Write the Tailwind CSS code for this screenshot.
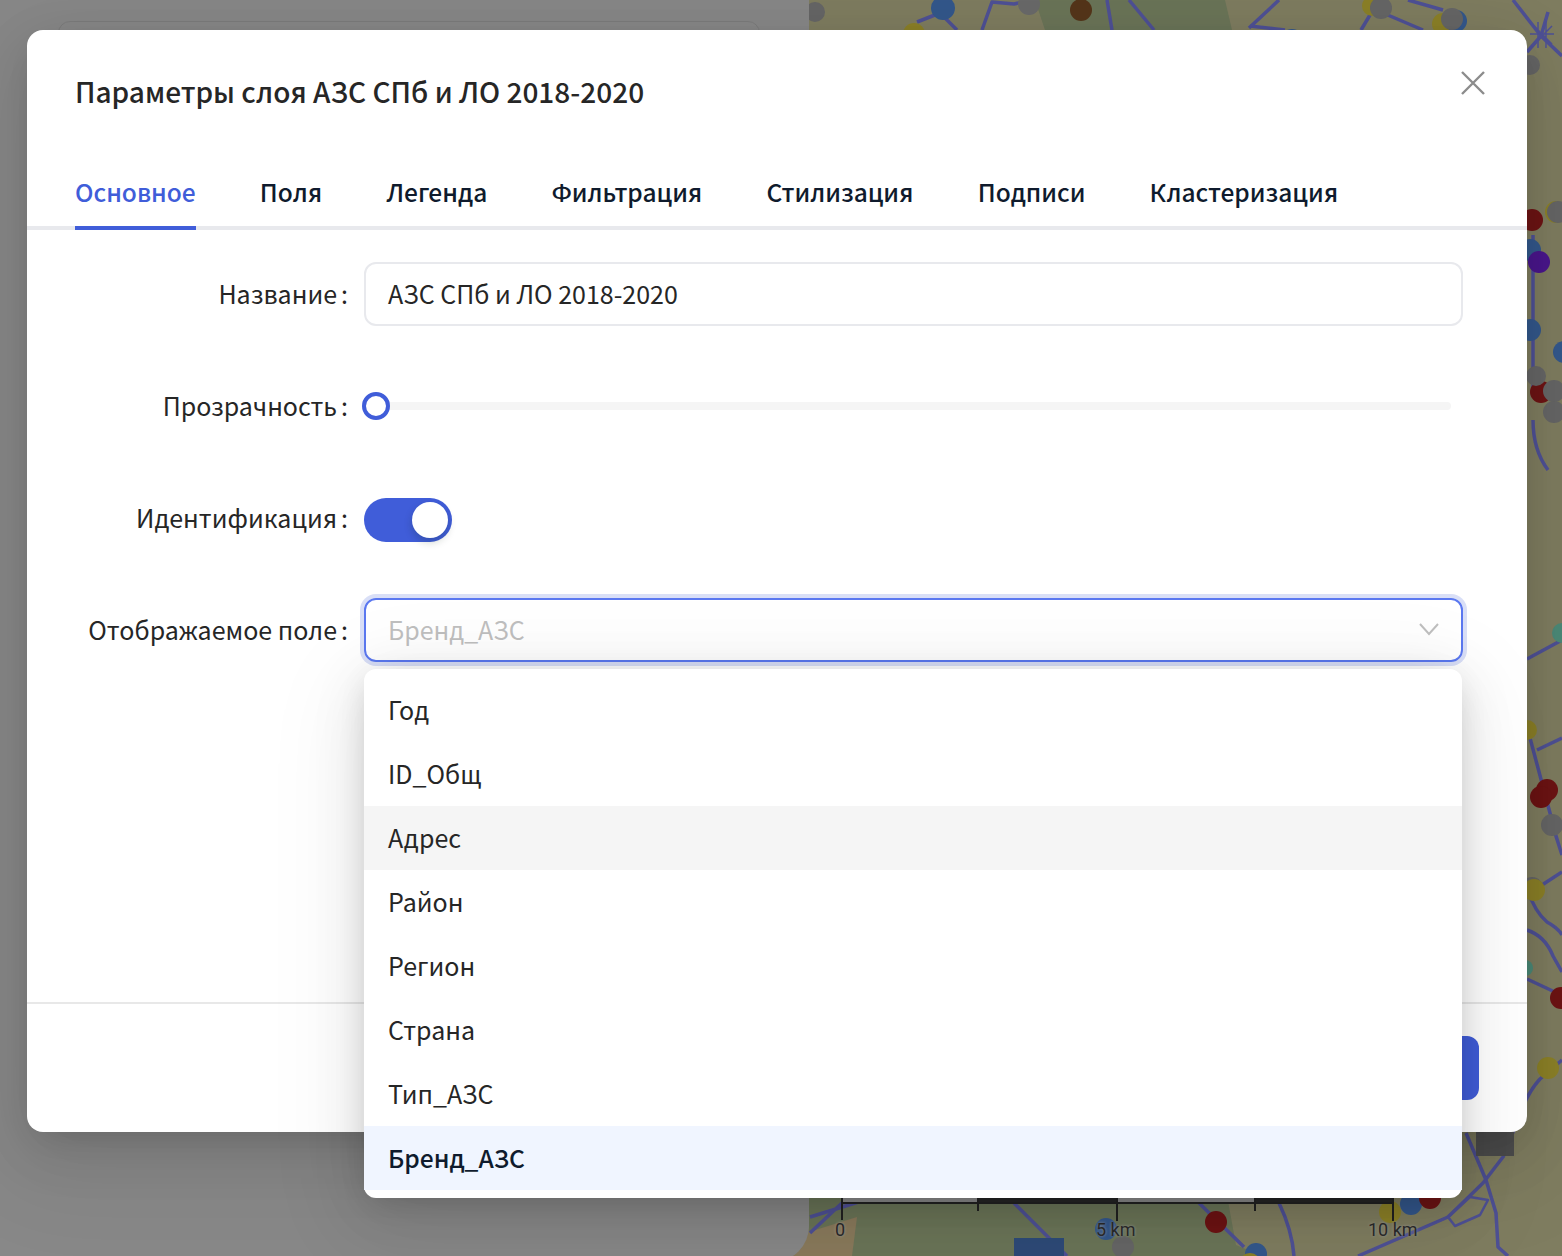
<!DOCTYPE html>
<html lang="ru">
  <head>
    <meta charset="UTF-8" />
    <title>Параметры слоя</title>
    <script src="https://cdn.jsdelivr.net/npm/@tailwindcss/browser@4"></script>
  </head>
  <body class="relative w-[1562px] h-[1256px] overflow-hidden bg-[#7f7d60] font-['Noto_Sans_CJK_SC','Noto_Sans',sans-serif] text-[#262626]">
    <!-- map behind the mask -->
    <svg class="absolute inset-0" width="1562" height="1256" viewBox="0 0 1562 1256" fill="none">
      <rect x="0" y="0" width="1562" height="1256" fill="#7f7d60" />
      <path d="M1035 0H1225L1232 30H1045Z" fill="#6b7558" />
      <path d="M809 1190H1226L1236 1245L1262 1256H809Z" fill="#6b7558" />
      <path d="M809 1232L857 1217L852 1256H790Z" fill="#8a7a5c" />
      <g stroke="#4f5196" stroke-width="3.5" stroke-linejoin="round">
        <path d="M917 22L940 13L957 30M945 5L940 13" />
        <path d="M982 30L992 2L1014 4L1032 0" />
        <path d="M1107 0L1112 30M1129 0L1154 30" />
        <path d="M1249 28L1279 0M1250 26L1285 30" />
        <path d="M1361 30L1373 10M1383 13L1423 30M1408 0L1443 10" />
        <path d="M1513 0L1541 36L1527 52M1541 36L1562 56M1541 36L1548 12" />
        <path d="M1534 26L1552 44M1552 26L1534 44M1538 22L1538 48M1546 22L1546 48M1530 34H1554" stroke-width="1.5" />
        <path d="M1533 235V395M1533 420Q1533 450 1548 470" />
        <path d="M1527 659L1562 640M1530 738L1550 813Q1555 835 1562 855M1537 750L1562 738M1542 885L1562 872" />
        <path d="M1527 889Q1535 912 1547 922Q1558 928 1562 935M1527 930Q1545 936 1553 956L1562 972M1527 979L1557 993" />
        <path d="M1562 1060L1540 1079Q1525 1095 1513 1132L1503 1157L1483 1183L1448 1217L1358 1256" />
        <path d="M1466 1133L1486 1180L1496 1213L1498 1247L1508 1256" />
        <path d="M1448 1217L1470 1197L1488 1200L1480 1215L1455 1226Z" stroke-width="2.5" />
        <path d="M810 1217L865 1200M810 1233L842 1203M1014 1203L1067 1256M1199 1203L1244 1247M1279 1203Q1292 1230 1294 1256" />
      </g>
      <g>
        <circle cx="815" cy="12" r="10" fill="#666" />
        <circle cx="943" cy="8" r="12" fill="#34588c" />
        <circle cx="914" cy="34" r="11" fill="#8c8128" />
        <circle cx="1029" cy="4" r="11" fill="#6a6a6a" />
        <circle cx="1081" cy="10" r="11" fill="#55361a" />
        <circle cx="1292" cy="40" r="11" fill="#34588c" />
        <circle cx="1372" cy="6" r="10" fill="#8c8128" />
        <circle cx="1381" cy="8" r="11" fill="#666" />
        <circle cx="1443" cy="24" r="11" fill="#8c8128" />
        <circle cx="1456" cy="21" r="11" fill="#34588c" />
        <circle cx="1452" cy="19" r="11" fill="#666" />
        <circle cx="1530" cy="65" r="10" fill="#666" />
        <circle cx="1532" cy="220" r="11" fill="#6d1414" />
        <circle cx="1556" cy="212" r="11" fill="#8c8128" />
        <circle cx="1558" cy="212" r="11" fill="#666" />
        <circle cx="1530" cy="250" r="11" fill="#34588c" />
        <circle cx="1539" cy="262" r="11" fill="#4a168c" />
        <circle cx="1530" cy="330" r="11" fill="#34588c" />
        <circle cx="1564" cy="352" r="11" fill="#34588c" />
        <circle cx="1541" cy="392" r="11" fill="#6d1414" />
        <circle cx="1536" cy="376" r="10" fill="#666" />
        <circle cx="1554" cy="391" r="11" fill="#666" />
        <circle cx="1554" cy="412" r="11" fill="#666" />
        <circle cx="1562" cy="633" r="10" fill="#4c8a78" />
        <circle cx="1527" cy="730" r="10" fill="#8c8128" />
        <circle cx="1547" cy="790" r="11" fill="#6d1414" />
        <circle cx="1541" cy="797" r="11" fill="#6d1414" />
        <circle cx="1552" cy="825" r="11" fill="#666" />
        <circle cx="1532" cy="888" r="11" fill="#666" />
        <circle cx="1534" cy="890" r="11" fill="#8c8128" />
        <circle cx="1525" cy="968" r="8" fill="#4c8a78" />
        <circle cx="1561" cy="998" r="11" fill="#6d1414" />
        <circle cx="1548" cy="1068" r="11" fill="#8c8128" />
        <circle cx="1106" cy="1229" r="11" fill="#34588c" />
        <circle cx="1123" cy="1247" r="11" fill="#666" />
        <circle cx="1216" cy="1222" r="11" fill="#6d1414" />
        <circle cx="1256" cy="1254" r="11" fill="#34588c" />
        <circle cx="1250" cy="1264" r="11" fill="#8c8128" />
        <circle cx="1253" cy="1268" r="11" fill="#6d1414" />
        <circle cx="1390" cy="1212" r="11" fill="#8c8128" />
        <circle cx="1411" cy="1204" r="11" fill="#34588c" />
        <circle cx="1430" cy="1198" r="11" fill="#6d1414" />
      </g>
      <rect x="1476" y="1125" width="38" height="31" fill="#4f4f4f" />
      <rect x="1014" y="1238" width="50" height="18" fill="#2f4b78" />
      <g fill="#222">
        <rect x="842" y="1197" width="136" height="6" fill="#8a8a8a" />
        <rect x="978" y="1197" width="138" height="6" fill="#262626" />
        <rect x="1116" y="1197" width="138" height="6" fill="#8a8a8a" />
        <rect x="1254" y="1197" width="139" height="6" fill="#262626" />
        <rect x="842" y="1202" width="551" height="2" />
        <rect x="841" y="1197" width="2" height="23" />
        <rect x="977" y="1197" width="2" height="14" />
        <rect x="1116" y="1197" width="2" height="24" />
        <rect x="1254" y="1197" width="2" height="14" />
        <rect x="1392" y="1197" width="2" height="24" />
      </g>
    </svg>
    <div class="absolute left-[835px] top-[1219px] text-[18px] leading-[22px] text-[#2b2b2b] font-['Roboto',sans-serif] [text-shadow:0_0_3px_#a0a0a0]">0</div>
    <div class="absolute left-[1096px] top-[1219px] text-[18px] leading-[22px] text-[#2b2b2b] font-['Roboto',sans-serif] [text-shadow:0_0_3px_#a0a0a0]">5 km</div>
    <div class="absolute left-[1368px] top-[1219px] text-[18px] leading-[22px] text-[#2b2b2b] font-['Roboto',sans-serif] [text-shadow:0_0_3px_#a0a0a0]">10 km</div>

    <!-- side panel under the mask -->
    <aside class="absolute left-0 top-0 w-[809px] h-[1262px] rounded-br-[36px] bg-[#888888]">
      <div class="ml-[58px] mt-[21px] w-[702px] h-[60px] rounded-t-xl border border-[#7c7c7c]"></div>
    </aside>

    <!-- modal -->
    <section class="absolute left-[27px] top-[30px] w-[1500px] h-[1102px] flex flex-col rounded-2xl bg-white shadow-[0_12px_32px_-16px_rgba(0,0,0,0.16),0_18px_56px_0_rgba(0,0,0,0.1),0_24px_96px_32px_rgba(0,0,0,0.06)]">
      <header class="h-[132px] pl-12 pr-[42px] flex justify-between">
        <h2 class="mt-[41px] text-[28px] leading-[40px] font-medium text-[#262626]">Параметры слоя АЗС СПб и ЛО 2018-2020</h2>
        <svg class="mt-[41px]" width="24" height="24" viewBox="0 0 24 24" fill="none" stroke="#8c8c8c" stroke-width="2.4">
          <path d="M1 1L23 23M23 1L1 23" />
        </svg>
      </header>
      <nav class="h-[68px] pl-12 flex gap-[64.2px] border-b-4 border-[#e8e9ed] text-[24.5px] leading-[60px] font-medium text-[#0f1b2d]">
        <a class="h-[68px] border-b-4 border-[#405dd9] text-[#405dd9]">Основное</a>
        <a>Поля</a>
        <a>Легенда</a>
        <a>Фильтрация</a>
        <a>Стилизация</a>
        <a>Подписи</a>
        <a>Кластеризация</a>
      </nav>
      <div class="flex-1 pt-8 pl-[40px] pr-16 text-[25px]">
        <div class="grid grid-cols-[281px_1fr] gap-y-12 items-center">
          <label class="text-right whitespace-nowrap">Название<span class="ml-1">:</span></label>
          <div class="ml-[16px] h-16 flex items-center rounded-xl border-2 border-[#e8e9ed] pl-[22px] pb-[1px]">АЗС СПб и ЛО 2018-2020</div>
          <label class="text-right whitespace-nowrap">Прозрачность<span class="ml-1">:</span></label>
          <div class="ml-[16px] h-16 flex items-center relative">
            <div class="ml-3 mr-3 h-2 w-full rounded bg-[#f5f5f5]"></div>
            <span class="absolute -left-[2px] top-[18px] size-7 rounded-full border-4 border-[#405dd9] bg-white"></span>
          </div>
          <label class="text-right whitespace-nowrap">Идентификация<span class="ml-1">:</span></label>
          <div class="ml-[16px] h-16 flex items-center pt-1">
            <span class="w-[88px] h-11 rounded-full bg-[#405dd9] flex justify-end items-center pr-1">
              <span class="size-9 rounded-full bg-white shadow-[0_4px_8px_rgba(0,35,11,0.2)]"></span>
            </span>
          </div>
          <label class="text-right whitespace-nowrap">Отображаемое поле<span class="ml-1">:</span></label>
          <div class="ml-[16px] h-16 flex items-center justify-between rounded-xl border-2 border-[#5b78f0] shadow-[0_0_0_4px_rgba(64,93,217,0.2)] pl-[22px] pr-[22px] text-[#bfbfbf]">
            <span class="-mt-[1px]">Бренд_АЗС</span>
            <svg class="-mt-[2px]" width="20" height="14" viewBox="0 0 20 14" fill="none" stroke="#bfbfbf" stroke-width="2"><path d="M1 2L10 12L19 2" /></svg>
          </div>
        </div>
      </div>
      <footer class="h-[130px] border-t-2 border-[#e8e8e8] flex justify-end pt-[32px] pr-12">
        <button class="w-[160px] h-16 rounded-xl bg-[#405dd9]"></button>
      </footer>
    </section>

    <!-- select dropdown -->
    <ul class="absolute left-[364px] top-[669px] w-[1098px] h-[529px] py-[9px] rounded-xl bg-white text-[25px] leading-[62px] text-[#262626] shadow-[0_6px_32px_-8px_rgba(0,0,0,0.16),0_12px_56px_0_rgba(0,0,0,0.1),0_18px_96px_16px_rgba(0,0,0,0.06)]">
      <li class="h-16 px-6">Год</li>
      <li class="h-16 px-6">ID_Общ</li>
      <li class="h-16 px-6 bg-[#f5f5f5]">Адрес</li>
      <li class="h-16 px-6">Район</li>
      <li class="h-16 px-6">Регион</li>
      <li class="h-16 px-6">Страна</li>
      <li class="h-16 px-6">Тип_АЗС</li>
      <li class="h-16 px-6 bg-[#f0f5ff] font-medium text-[24.6px] text-[#0f1b2d]">Бренд_АЗС</li>
    </ul>
  </body>
</html>
